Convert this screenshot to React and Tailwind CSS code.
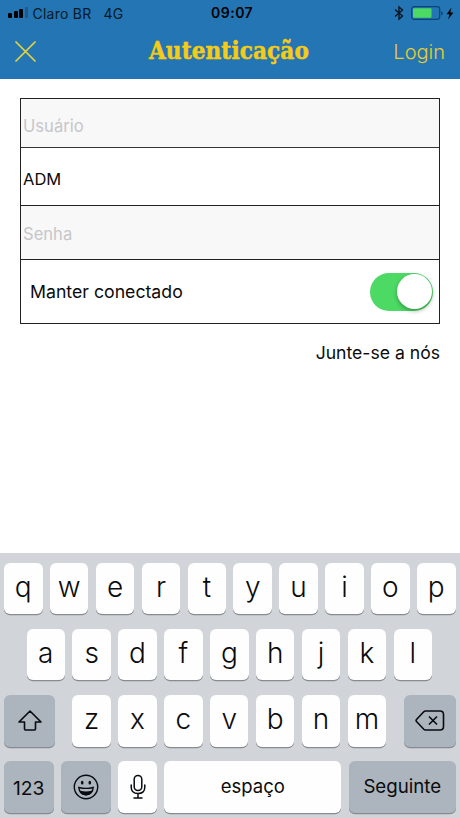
function StatusBar() {
  return (
    <div className="relative flex h-[26px] items-center justify-between pl-2 pr-[6px] text-black">
      <div className="flex items-center">
        <div className="flex h-[10px] items-end gap-[1.5px]">
          <i className="h-[5px] w-[4px] rounded-[1px] bg-black" />
          <i className="h-[7px] w-[4px] rounded-[1px] bg-black" />
          <i className="h-[9px] w-[4px] rounded-[1px] bg-black" />
          <i className="h-[11px] w-[3px] rounded-[1px] bg-[#1e5b8c]" />
        </div>
        <span className="ml-[5px] text-[14px] tracking-[0.25px] text-[#061a2a]">Claro BR</span>
        <span className="ml-[12px] text-[14px] tracking-[0.2px] text-[#061a2a]">4G</span>
      </div>
      <span className="absolute left-[211px] top-[2px] text-[14px] font-semibold tracking-[0.5px]">09:07</span>
      <div className="flex items-center">
        <svg width="10" height="16" viewBox="0 0 10 16" fill="none" stroke="#06121c" strokeWidth="1.3">
          <path d="M1 4.5 8.5 11 5 14V2l3.500 3L1 11.500" />
        </svg>
        <svg className="ml-[7px]" width="33" height="16" viewBox="0 0 33 16">
          <rect x=".7" y="1.700" width="28" height="12.600" rx="2.500" fill="none" stroke="#0d4470" strokeWidth="1.200" />
          <rect x="2" y="3.200" width="18.500" height="9.600" rx=".8" fill="#4cd964" />
          <path d="M30.200 6v4.500q1.600-.7 1.600-2.250T30.200 6" fill="#0d4470" />
        </svg>
        <svg className="ml-[2px]" width="8" height="13" viewBox="0 0 8 13">
          <path d="M5.500.5.500 7.300h3L2 12.500l5.500-7H4.400z" fill="#05080b" />
        </svg>
      </div>
    </div>
  );
}

function Header() {
  return (
    <header className="h-[79px] bg-[#2475b4]">
      <StatusBar />
      <div className="flex h-[50px] items-center pl-[15px] pr-[15px] text-[#e9cd2e]">
        <svg width="21" height="21" viewBox="0 0 21 21" fill="none" stroke="#e4d340" strokeWidth="1.700" strokeLinecap="round">
          <path d="M1 1l19 19M20 1 1 20" />
        </svg>
        <h1 className="ml-[113px] whitespace-nowrap font-['DejaVu_Serif_Condensed','DejaVu_Serif',serif] text-[24px] font-bold leading-[30px] tracking-[0.1px] text-[#f4cb17] [-webkit-text-stroke:0.5px_#f4cb17]">
          Autenticação
        </h1>
        <span className="ml-auto pt-[2px] text-[20px] font-light">Login</span>
      </div>
    </header>
  );
}

function LoginForm() {
  return (
    <main className="h-[474px] px-5 pt-[19px]">
      <div className="border border-[#222]">
        <div className="flex h-[49px] items-center border-b border-[#333] bg-[#f8f8f8] pl-[2px] pt-[6px] text-[16.6px] text-[#c6c6ca]">Usuário</div>
        <div className="flex h-[58px] items-center border-b border-[#222] pl-[2px] pt-[5px] text-[16.5px]">ADM</div>
        <div className="flex h-[54px] items-center border-b border-[#222] bg-[#f8f8f8] pl-[2px] pt-[3px] text-[16.6px] text-[#c6c6ca]">Senha</div>
        <div className="flex h-[63px] items-center justify-between pl-[9px] pr-[6px] text-[17.7px]">
          <span className="pt-[1px]">Manter conectado</span>
          <span className="flex h-[38px] w-[63px] items-center justify-end rounded-full bg-[#4cd964] pr-[1.500px]">
            <i className="h-[35px] w-[35px] rounded-full bg-white shadow-[0_2px_4px_rgba(0,0,0,0.3)]" />
          </span>
        </div>
      </div>
      <div className="mt-[17px] text-right text-[17.6px] leading-6">Junte-se a nós</div>
    </main>
  );
}

const KEY = "flex h-[51.500px] shrink-0 items-center justify-center rounded-[6px] shadow-[0_1.300px_0_#888b90]";

function Letters({ keys }) {
  return (
    <div className="flex gap-[7.400px]">
      {keys.split("").map((letter) => (
        <div key={letter} className={KEY + " w-[38.500px] bg-[#fefefe] pb-[3px] text-[28px] font-[350]"}>
          {letter}
        </div>
      ))}
    </div>
  );
}

function Keyboard() {
  return (
    <section className="flex h-[265px] flex-col gap-[14.800px] bg-[#d1d5da] pl-[4px] pt-[9.500px]">
      <Letters keys="qwertyuiop" />
      <div className="pl-[22.500px]"><Letters keys="asdfghjkl" /></div>
      <div className="flex">
        <div className={KEY + " mr-[17.300px] w-[51px] bg-[#acb4be]"}>
          <svg width="26" height="24" viewBox="0 0 26 24" fill="none" stroke="#080b10" strokeWidth="1.600" strokeLinejoin="round">
            <path d="M13 2 2 13h5.500v7q0 1 1 1h9q1 0 1-1v-7H24z" />
          </svg>
        </div>
        <Letters keys="zxcvbnm" />
        <div className={KEY + " ml-[18px] w-[51.500px] bg-[#acb4be]"}>
          <svg width="30" height="22" viewBox="0 0 30 22" fill="none" stroke="#080b10" strokeWidth="1.600" strokeLinejoin="round">
            <path d="M10.500 1H25q3.500 0 3.500 3.500v12q0 3.500-3.500 3.500H10.500q-1 0-1.700-.7L1.500 11.500q-.8-1 0-2L8.800 1.700Q9.500 1 10.500 1M14 6.500l8 8M22 6.500l-8 8" />
          </svg>
        </div>
      </div>
      <div className="flex text-[18px]">
        <div className={KEY + " w-[49.500px] bg-[#acb4be] pt-[2px] text-[19.3px]"}>123</div>
        <div className={KEY + " ml-[7.500px] w-[50px] bg-[#acb4be]"}>
          <svg width="26" height="26" viewBox="0 0 26 26" fill="none" stroke="#080b10" strokeWidth="1.400">
            <circle cx="13" cy="13" r="11.700" />
            <ellipse cx="9.200" cy="8.700" rx="1.300" ry="1.900" fill="#080b10" stroke="none" />
            <ellipse cx="16.800" cy="8.700" rx="1.300" ry="1.900" fill="#080b10" stroke="none" />
            <path d="M5.800 13.500q7.200 1.800 14.400 0-.8 7.200-7.200 7.200t-7.200-7.200z" />
            <path d="M7.200 17.500q5.800 1.600 11.600 0-1.800 3.200-5.800 3.200t-5.800-3.200" fill="#080b10" />
          </svg>
        </div>
        <div className={KEY + " ml-[7.300px] w-[38.700px] bg-[#fefefe]"}>
          <svg width="16" height="26" viewBox="0 0 16 26" fill="none" stroke="#080b10" strokeWidth="1.500" strokeLinecap="round">
            <rect x="4.200" y="1.500" width="7.600" height="15" rx="3.800" />
            <path d="M1.200 11v2q0 6.500 6.800 6.500t6.800-6.500v-2M8 19.500v4.500M4 24h8" />
          </svg>
        </div>
        <div className={KEY + " ml-[7.300px] w-[177px] bg-[#fefefe] text-[18.5px]"}>espaço</div>
        <div className={KEY + " ml-[7.500px] w-[107px] bg-[#acb4be] text-[18.7px]"}>Seguinte</div>
      </div>
    </section>
  );
}

export default function App() {
  return (
    <div className="h-[818px] w-[460px] overflow-hidden bg-white font-['Inter','Liberation_Sans',sans-serif] text-[#0b0b0b]">
      <Header />
      <LoginForm />
      <Keyboard />
    </div>
  );
}
